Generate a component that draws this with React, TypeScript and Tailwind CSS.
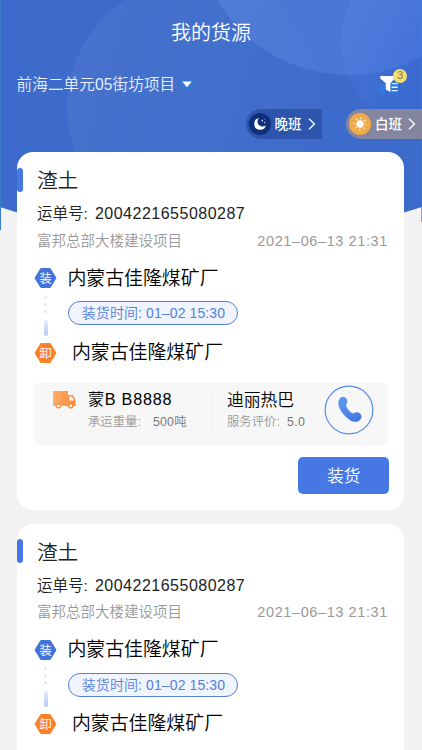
import { ReactNode } from 'react';
import clsx from 'clsx';

type Carrier = {
  plate: string;
  weight: string;
  driver: string;
  rating: string;
};

type Order = {
  id: number;
  cargo: string;
  orderNo: string;
  project: string;
  createdAt: string;
  from: string;
  to: string;
  loadTime: string;
  carrier?: Carrier;
};

const orders: Order[] = [
  {
    id: 1,
    cargo: '渣土',
    orderNo: '2004221655080287',
    project: '富邦总部大楼建设项目',
    createdAt: '2021–06–13 21:31',
    from: '内蒙古佳隆煤矿厂',
    to: '内蒙古佳隆煤矿厂',
    loadTime: '01–02 15:30',
    carrier: {
      plate: '蒙B B8888',
      weight: '500吨',
      driver: '迪丽热巴',
      rating: '5.0',
    },
  },
  {
    id: 2,
    cargo: '渣土',
    orderNo: '2004221655080287',
    project: '富邦总部大楼建设项目',
    createdAt: '2021–06–13 21:31',
    from: '内蒙古佳隆煤矿厂',
    to: '内蒙古佳隆煤矿厂',
    loadTime: '01–02 15:30',
  },
];

const HeaderBackground = () => (
  <svg className="absolute inset-x-0 top-0" width="422" height="232" viewBox="0 0 422 232">
    <defs>
      <linearGradient id="ringA" x1="0" y1="0.3" x2="1" y2="0.6">
        <stop offset="0" stopColor="#fff" stopOpacity="0.05" />
        <stop offset="1" stopColor="#fff" stopOpacity="0.01" />
      </linearGradient>
      <linearGradient id="ringB" x1="0.1" y1="0.5" x2="0.8" y2="1">
        <stop offset="0" stopColor="#7aa0ec" stopOpacity="0.26" />
        <stop offset="1" stopColor="#5b8cf0" stopOpacity="0.32" />
      </linearGradient>
      <linearGradient id="ringC" x1="0" y1="0.3" x2="0.8" y2="0.7">
        <stop offset="0" stopColor="#6c98f2" stopOpacity="0.18" />
        <stop offset="0.6" stopColor="#3567e0" stopOpacity="0.25" />
      </linearGradient>
    </defs>
    <path d="M0 0H422V207L404 212.5L211 270L17 212.5L0 207Z" fill="#3d6bcb" />
    <path d="M0 0H1V230H0ZM421.4 0H422V222H421.4Z" fill="#397cc9" />
    <circle cx="195" cy="107" r="128" fill="url(#ringA)" />
    <circle cx="349" cy="-79" r="154" fill="url(#ringB)" />
    <circle cx="427" cy="42" r="86" fill="url(#ringC)" />
  </svg>
);

const FilterIcon = () => (
  <svg width="20" height="19" viewBox="0 0 20 19">
    <path d="M0 9H6V18.5H0ZM11 6H18.5V18.5H11Z" fill="#2585e4" opacity="0.55" />
    <path d="M.3 1H14.5V3.4L10.4 8.2V17L5.8 14.6V8.2L.3 3.4Z" fill="#fff" />
    <path d="M11.7 8.6H17.7M11.7 12.2H17.7M11.7 15.6H17.7" stroke="#e5efff" strokeWidth="1.4" />
  </svg>
);

const MoonIcon = () => (
  <svg className="shrink-0" width="22" height="22" viewBox="0 0 22 22">
    <circle cx="11" cy="11" r="11" fill="#0d2f7c" />
    <path d="M10 5.1A5.9 5.9 0 1 0 16.9 12.2A4.4 4.4 0 0 1 10 5.1Z" fill="#fff" />
    <circle cx="13.3" cy="7.6" r="0.9" fill="#c9d5f2" />
    <circle cx="15.7" cy="9.5" r="0.7" fill="#c9d5f2" />
    <circle cx="15.8" cy="6.5" r="0.5" fill="#8ba0d2" />
  </svg>
);

const SunIcon = () => (
  <svg className="shrink-0" width="22" height="22" viewBox="0 0 22 22">
    <circle cx="11" cy="11" r="11" fill="#f1aa48" />
    <circle cx="11" cy="11" r="3.7" fill="#fff" />
    <circle
      cx="11"
      cy="11"
      r="5.7"
      fill="none"
      stroke="#fff"
      strokeWidth="1.4"
      strokeDasharray="1.3 3.177"
      strokeDashoffset="0.65"
    />
  </svg>
);

const TruckIcon = () => (
  <svg width="23" height="18" viewBox="0 0 23 18">
    <defs>
      <linearGradient id="truck" x1="0" y1="0" x2="1" y2="0">
        <stop offset="0" stopColor="#ffac6b" />
        <stop offset="1" stopColor="#f98b38" />
      </linearGradient>
    </defs>
    <path
      d="M1 0H14.2Q15 0 15 .8V4H19.2Q20 4 20.4 4.8L22.6 9.2V15H0V1Q0 0 1 0ZM16.3 5.5V9.5H21L19 5.5Z"
      fill="url(#truck)"
      fillRule="evenodd"
    />
    <circle cx="5.3" cy="14.8" r="2.1" fill="#f7f7f7" stroke="#fb9348" strokeWidth="1.4" />
    <circle cx="17.8" cy="14.8" r="2.1" fill="#f7f7f7" stroke="#f98b38" strokeWidth="1.4" />
  </svg>
);

const PhoneIcon = () => (
  <svg width="50" height="50" viewBox="0 0 50 50">
    <defs>
      <linearGradient id="phone" x1="0" y1="0" x2="1" y2="1">
        <stop offset="0" stopColor="#629bf2" />
        <stop offset="1" stopColor="#3f73df" />
      </linearGradient>
    </defs>
    <circle cx="25" cy="25" r="23.8" fill="none" stroke="#558de5" strokeWidth="1.2" />
    <path
      d="M15.3 13.9C17.2 11 21.6 11.1 22.9 14.4C23.8 16.9 23.1 18.3 22 19.8C22.3 23.3 26 27.6 29.5 28.5C31.5 27.1 34.4 26.7 36.5 29C38.4 31.4 37.4 34 35.1 35.7C32.5 37.4 29.4 37.2 26.4 35.4C20.3 31.6 15.2 25.2 14.2 18.6Q13.9 16.1 15.3 13.9Z"
      fill="url(#phone)"
    />
  </svg>
);

const ShiftTag = ({ icon, label, className }: { icon: ReactNode; label: string; className: string }) => (
  <button className={clsx('flex h-[30px] w-[76px] items-center rounded-l-full pl-[3px] text-white', className)}>
    {icon}
    <span className="mt-px ml-[4px] text-[13.5px] leading-none font-medium whitespace-nowrap">{label}</span>
    <svg className="ml-[6px] shrink-0" width="8" height="12" viewBox="0 0 8 12">
      <path d="M1 .8L6.4 6L1 11.2" fill="none" stroke="#fff" strokeWidth="1.3" />
    </svg>
  </button>
);

const Hexagon = ({ label, color }: { label: string; color: string }) => (
  <svg className="shrink-0" width="23" height="20" viewBox="0 0 23 20">
    <path
      d="M6.8 .5H16.2L22 10L16.2 19.5H6.8L1 10Z"
      fill={color}
      stroke={color}
      strokeWidth="1"
      strokeLinejoin="round"
    />
    <text x="11.5" y="14.7" fontSize="12.5" fill="#fff" textAnchor="middle">
      {label}
    </text>
  </svg>
);

const RouteLine = () => (
  <div className="flex w-[23px] flex-col items-center gap-[4px] pt-[7.5px]">
    <i className="size-[3px] rounded-full bg-[#e6ecfa]" />
    <i className="size-[3px] rounded-full bg-[#e0e8fa]" />
    <i className="size-[3px] rounded-full bg-[#dbe4f9]" />
    <i className="mt-[3px] h-[16px] w-[3.5px] rounded-full bg-linear-to-b from-[#e6ecfb] to-[#b5c9f2]" />
  </div>
);

const CarrierPanel = ({ carrier }: { carrier: Carrier }) => (
  <>
    <div className="mt-[20.5px] ml-[17px] flex h-[62px] w-[354px] rounded-[5px] bg-[#f7f7f7]">
      <div className="w-[53.5px] pt-[8px] pl-[19px]">
        <TruckIcon />
      </div>
      <div className="w-[123.5px] pt-[8px] leading-none">
        <p className="flex h-[17px] items-center text-[16.2px] tracking-[0.75px] text-black">{carrier.plate}</p>
        <p className="mt-[6.5px] flex h-[16px] items-center text-[12.4px] text-[#999]">
          <span className="w-[65px]">承运重量:</span>
          <span className="tracking-[0.2px] text-[#777]">{carrier.weight}</span>
        </p>
      </div>
      <i className="mt-[9px] h-[38px] w-px bg-[#eee]" />
      <div className="w-[112px] pt-[10px] pl-[14.5px] leading-none">
        <p className="flex h-[17px] items-center text-[16.8px] text-black">{carrier.driver}</p>
        <p className="mt-[4.5px] flex h-[16px] items-center text-[12.4px] text-[#999]">
          <span className="w-[60px]">服务评价:</span>
          <span className="tracking-[0.4px] text-[#777]">{carrier.rating}</span>
        </p>
      </div>
      <div className="pt-[2px]">
        <PhoneIcon />
      </div>
    </div>

    <button className="mt-[12px] ml-[281px] flex h-[37px] w-[90.5px] items-center justify-center rounded-[5px] bg-[#4677e4] pt-px text-[16.5px] leading-none text-white">
      装货
    </button>
  </>
);

const OrderCard = ({ order }: { order: Order }) => (
  <section className="h-[358px] w-[387px] shrink-0 rounded-[16px] bg-white pt-[15.5px] text-[#222]">
    <div className="flex h-[24px] items-center">
      <i className="h-[24px] w-[5.5px] rounded-[3px] bg-[#4677e4]" />
      <h2 className="mt-[4px] ml-[14px] text-[20.7px] leading-none">{order.cargo}</h2>
    </div>

    <div className="pr-[16.5px] pl-[19.5px]">
      <p className="mt-[12.5px] flex h-[20px] items-center text-[15.5px] leading-none text-[#222]">
        <span className="w-[58px]">运单号:</span>
        <span className="text-[16px] tracking-[0.5px]">{order.orderNo}</span>
      </p>
      <p className="mt-[7px] flex h-[20px] items-center justify-between text-[14.5px] leading-none text-[#999]">
        <span>{order.project}</span>
        <span className="tracking-[0.6px]">{order.createdAt}</span>
      </p>
    </div>

    <div className="mt-[17px] flex h-[20px] items-center pl-[17px] text-[18.9px] leading-none text-black">
      <Hexagon label="装" color="#4273da" />
      <span className="mt-[2px] ml-[10px]">{order.from}</span>
    </div>
    <div className="flex h-[54.5px] pl-[17px]">
      <RouteLine />
      <div className="mt-[13px] ml-[11px] flex h-[24px] w-[170px] items-center justify-center rounded-full border border-[#5580d6] bg-[#eff4ff] text-[14px] leading-none tracking-[0.1px] whitespace-pre text-[#5580d6]">
        装货时间: {order.loadTime}
      </div>
    </div>
    <div className="flex h-[20px] items-center pl-[17px] text-[18.9px] leading-none text-black">
      <Hexagon label="卸" color="#fa8128" />
      <span className="mt-px ml-[14.5px]">{order.to}</span>
    </div>

    {order.carrier && <CarrierPanel carrier={order.carrier} />}
  </section>
);

const App = () => (
  <main className="relative h-[750px] w-[422px] overflow-hidden bg-[#f2f2f2] font-['Liberation_Sans','Noto_Sans_CJK_SC',sans-serif] font-[350]">
    <HeaderBackground />
    <div className="relative">
      <header className="h-[152px] text-white">
        <h1 className="flex h-[64px] items-center justify-center pt-[2px] text-[20px] leading-none font-[350]">
          我的货源
        </h1>
        <div className="flex h-[40px] items-center pl-[16.5px]">
          <span className="mt-px text-[15.6px] leading-none tracking-[0.1px] text-[#e6eeff]">
            前海二单元05街坊项目
          </span>
          <svg className="ml-[6px]" width="12" height="9" viewBox="0 0 12 9">
            <path d="M0 0H12V9H0Z" fill="#2585e4" opacity="0.35" />
            <path d="M1.2 1.5H10.8L6 7.2Z" fill="#fff" />
          </svg>
          <div className="relative mr-[22.5px] ml-auto">
            <FilterIcon />
            <span className="absolute top-[-6px] left-[13.5px] flex size-[14px] items-center justify-center rounded-full bg-[#f7dd6b] text-[11px] leading-none text-[#7d7654]">
              3
            </span>
          </div>
        </div>
        <div className="mt-[5px] flex justify-end gap-[24.5px]">
          <ShiftTag icon={<MoonIcon />} label="晚班" className="bg-[#2d55ae]" />
          <ShiftTag icon={<SunIcon />} label="白班" className="bg-[#84869f]" />
        </div>
      </header>
      <div className="flex flex-col gap-[13.5px] pl-[17.4px]">
        {orders.map((order) => (
          <OrderCard key={order.id} order={order} />
        ))}
      </div>
    </div>
  </main>
);

export default App;
